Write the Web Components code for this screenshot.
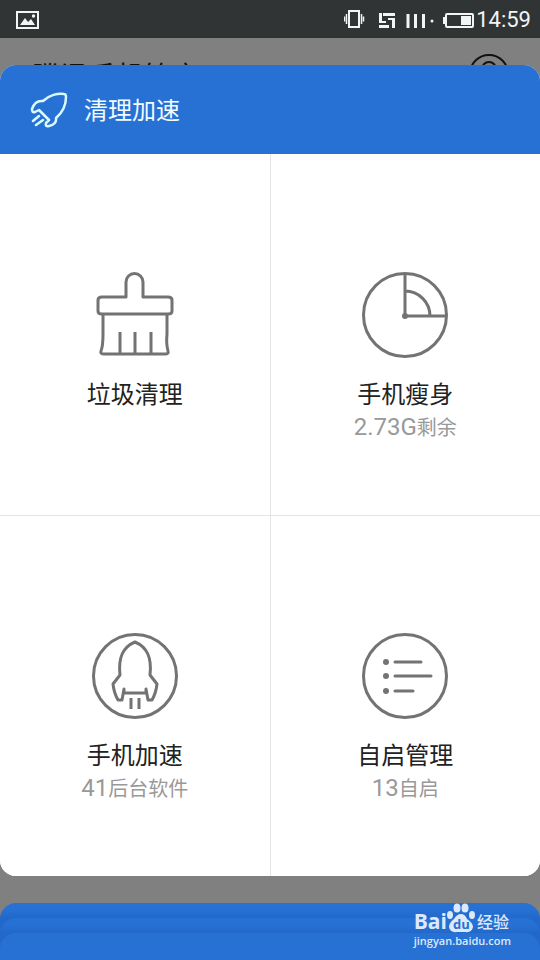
<!DOCTYPE html>
<html lang="zh-CN">
<head>
<meta charset="utf-8">
<meta name="viewport" content="width=device-width, initial-scale=1">
<title>清理加速</title>
<style>
  body {
    margin: 0;
    background: #808080;
    color: #222;
    font-family: Roboto, "Noto Sans CJK SC", sans-serif;
  }
</style>
</head>
<body>
<phone-screen>
  <status-bar slot="status">14:59</status-bar>
  <app-header slot="header">腾讯手机管家</app-header>
  <app-card heading="清理加速">
    <tool-tile label="垃圾清理">
      <svg slot="icon" viewBox="0 0 86 86">
        <path d="M34 25V10a8 8 0 0 1 17 0V25H76q4 0 4 3V39q0 3-4 3H10q-4 0-4-3V28q0-3 4-3ZM11 43V62Q11 74 9 79q-1 3 3 3H73q4 0 3-3Q74 72 75 62V43M28 60V81M43 60V81M59 60V81"/>
      </svg>
    </tool-tile>
    <tool-tile label="手机瘦身" count="2.73G" unit="剩余">
      <svg slot="icon" viewBox="0 0 86 86">
        <circle cx="43" cy="43" r="41.5"/>
        <path d="M43 2V44H84M43 19A25 25 0 0 1 68 44"/>
        <circle class="dot" cx="43" cy="44" r="3"/>
      </svg>
    </tool-tile>
    <tool-tile label="手机加速" count="41" unit="后台软件">
      <svg slot="icon" viewBox="0 0 86 86">
        <circle cx="43" cy="43" r="41.5"/>
        <path d="M28 42C26 24 31 14 43 9C55 14 60 24 58 42L65 51Q64 60 60 67H56L54 56V60H32V56L30 67H26Q22 60 21 51ZM39 65V76M47 65V76"/>
      </svg>
    </tool-tile>
    <tool-tile label="自启管理" count="13" unit="自启">
      <svg slot="icon" viewBox="0 0 86 86">
        <circle cx="43" cy="43" r="41.5"/>
        <path d="M33 29H59M33 43H69M33 58H51" stroke-linecap="round"/>
        <circle class="dot" cx="24" cy="29" r="3"/>
        <circle class="dot" cx="24" cy="43" r="3"/>
        <circle class="dot" cx="24" cy="58" r="3"/>
      </svg>
    </tool-tile>
  </app-card>
  <card-stack slot="footer"></card-stack>
</phone-screen>

<script>
const define = (name, html, setup) => {
  const template = document.createElement("template");
  template.innerHTML = html;
  customElements.define(name, class extends HTMLElement {
    constructor() {
      super();
      this.attachShadow({ mode: "open" });
      this.shadowRoot.appendChild(template.content.cloneNode(true));
    }
    connectedCallback() {
      if (setup) setup(this, this.shadowRoot);
    }
  });
};

define("status-bar", `
  <style>
    :host {
      display: flex;
      align-items: center;
      box-sizing: border-box;
      height: 38px;
      padding: 2px 9px 0 16px;
      background: #303434;
      color: #f2f5f5;
      font-size: 22px;
      line-height: 36px;
    }
    svg { display: block; fill: none; stroke: #f2f5f5; }
    .signals { margin-left: auto; }
    .solid { fill: #f2f5f5; stroke: none; }
  </style>
  <svg width="23" height="18" viewBox="0 0 23 18" aria-hidden="true">
    <rect x="1" y="1" width="21" height="16" stroke-width="2"/>
    <path class="solid" d="M4 14L9 7l3 4 3-3 4 6Z"/>
    <circle class="solid" cx="17.5" cy="5" r="1.7"/>
  </svg>
  <svg class="signals" width="132" height="20" viewBox="0 0 132 20" aria-hidden="true">
    <rect x="5" y="1" width="10" height="16" stroke-width="2"/>
    <path d="M2.5 4V14M.5 6.5V11.5M17.5 4V14M19.5 6.5V11.5" stroke-width="1.5"/>
    <path class="solid" d="M35 3h3v8h4v2h-7ZM39 3h12v3H39ZM35 15h10v3H35ZM44 8h7v10h-3v-8h-4Z"/>
    <path d="M64 4V18M71.5 4V18M79.5 4V18" stroke-width="3"/>
    <circle class="solid" cx="88" cy="11" r="1.5"/>
    <rect x="102" y="4" width="27" height="13" rx="1" stroke-width="2"/>
    <path class="solid" d="M117 6h10v9H117ZM99 7h3v7h-3Z"/>
  </svg>
  <time><slot></slot></time>
`);

define("app-header", `
  <style>
    :host {
      display: flex;
      align-items: flex-start;
      justify-content: space-between;
      box-sizing: border-box;
      height: 88px;
      padding: 16px 30px 0 32px;
      color: #111;
      font-size: 28px;
      line-height: 48px;
    }
    svg { display: block; fill: none; stroke: #111; stroke-width: 2; }
  </style>
  <span><slot></slot></span>
  <svg width="42" height="42" viewBox="0 0 42 42" aria-hidden="true">
    <circle cx="21" cy="20" r="19"/>
    <circle cx="21" cy="15" r="7"/>
    <path d="M8 34q3-11 13-11t13 11"/>
  </svg>
`);

define("app-card", `
  <style>
    :host {
      position: relative;
      display: flex;
      flex-direction: column;
      flex: 1;
      overflow: hidden;
      border-radius: 16px;
      background: #fff;
    }
    header {
      display: flex;
      align-items: center;
      gap: 16px;
      height: 89px;
      padding: 0 30px;
      background: #2871d4;
      color: #f0fcff;
    }
    svg { fill: none; stroke: #d8faff; stroke-width: 2.5; stroke-linejoin: round; stroke-linecap: round; }
    h1 { margin: 0; padding-top: 2px; font-size: 24px; font-weight: 400; line-height: 32px; }
    .grid {
      display: grid;
      flex: 1;
      grid-template-columns: 1fr 1fr;
      grid-auto-rows: 1fr;
      gap: 1px;
      background: #e4e4e4;
    }
  </style>
  <header>
    <svg width="38" height="36" viewBox="0 0 38 36" aria-hidden="true">
      <path d="M13 9C19 3 28 1 34 2Q36 2 36 5C36 14 33 20 26 26Q27 32 19 34Q15 35 16 31L19 28L9 18L5 20Q2 21 2 17Q5 8 13 9ZM9 24L3 29M13 28L6 33"/>
    </svg>
    <h1></h1>
  </header>
  <div class="grid"><slot></slot></div>
`, (host, root) => {
  root.querySelector("h1").textContent = host.getAttribute("heading");
});

define("tool-tile", `
  <style>
    :host { display: flex; background: #fff; }
    button {
      display: flex;
      flex: 1;
      flex-direction: column;
      align-items: center;
      justify-content: center;
      padding: 46px 0 0;
      border: 0;
      background: none;
      color: #222;
      font: inherit;
      cursor: pointer;
    }
    ::slotted(svg) {
      display: block;
      width: 86px;
      height: 86px;
      margin-bottom: 21px;
      overflow: visible;
      fill: none;
      stroke: #737373;
      stroke-width: 3;
      stroke-linejoin: round;
    }
    .label { font-size: 24px; line-height: 32px; }
    .detail {
      height: 32px;
      color: #999;
      font-size: 20px;
      line-height: 32px;
    }
    .count { font-size: 24px; }
  </style>
  <button type="button">
    <slot name="icon"></slot>
    <span class="label"></span>
    <span class="detail"><span class="count"></span><span class="unit"></span></span>
  </button>
`, (host, root) => {
  for (const name of ["label", "count", "unit"]) {
    root.querySelector("." + name).textContent = host.getAttribute(name) || "";
  }
  host.querySelectorAll(".dot").forEach((dot) => {
    dot.style.fill = "#737373";
    dot.style.stroke = "none";
  });
});

define("site-mark", `
  <style>
    :host { display: block; color: #dce9fb; }
    .brand { display: flex; align-items: flex-end; height: 32px; }
    .bai {
      font: 700 21px/24px "Open Sans", sans-serif;
    }
    .paw { display: block; width: 28px; height: 30px; fill: #dce9fb; }
    .paw text { fill: #2871d4; font: 700 13px "Open Sans", sans-serif; }
    .name { margin-left: 2px; font-size: 16px; font-weight: 500; line-height: 20px; }
    .address {
      display: block;
      font: 600 11px/16px "Open Sans", sans-serif;
    }
  </style>
  <div class="brand">
    <span class="bai">Bai</span>
    <svg class="paw" viewBox="0 0 28 30">
      <ellipse cx="3" cy="12" rx="3" ry="4"/>
      <ellipse cx="10" cy="5" rx="3.5" ry="4.5"/>
      <ellipse cx="18" cy="5" rx="3.5" ry="4.5"/>
      <ellipse cx="25" cy="12" rx="3" ry="4"/>
      <path d="M14 11q4 0 6 5 6 4 6 8-1 6-8 5h-8q-7 1-8-5 0-4 5-8 3-5 7-5Z"/>
      <text x="6" y="26">du</text>
    </svg>
    <span class="name">经验</span>
  </div>
  <span class="address">jingyan.baidu.com</span>
`);

define("card-stack", `
  <style>
    :host { display: block; position: relative; height: 57px; overflow: hidden; }
    .card {
      border-radius: 16px 16px 0 0;
      background: linear-gradient(#2871d4 6px, #2268cb 15px);
      padding-top: 15px;
    }
    .card.front { height: 40px; padding: 0; background: #2871d4; }
    site-mark { position: absolute; right: 29px; top: -2px; }
  </style>
  <div class="card"><div class="card"><div class="card front"></div></div></div>
  <site-mark></site-mark>
`);

define("phone-screen", `
  <style>
    :host { display: flex; flex-direction: column; min-height: 100vh; }
    main { display: flex; flex: 1; margin: -61px 0 27px; }
  </style>
  <slot name="status"></slot>
  <slot name="header"></slot>
  <main><slot></slot></main>
  <slot name="footer"></slot>
`);
</script>
</body>
</html>
